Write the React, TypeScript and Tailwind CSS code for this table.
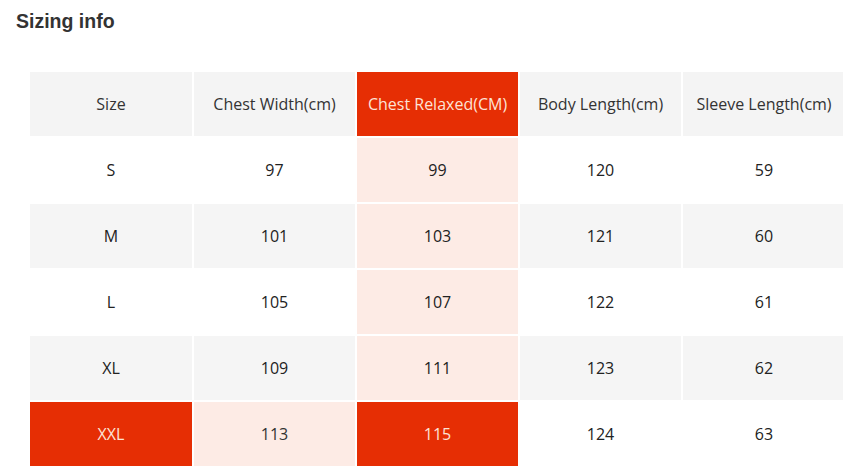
const headers = ["Size", "Chest Width(cm)", "Chest Relaxed(CM)", "Body Length(cm)", "Sleeve Length(cm)"]

const rows = [
  ["S", "97", "99", "120", "59"],
  ["M", "101", "103", "121", "60"],
  ["L", "105", "107", "122", "61"],
  ["XL", "109", "111", "123", "62"],
  ["XXL", "113", "115", "124", "63"],
]

function cellClass(r: number, c: number) {
  // r = -1 is the header row
  if (r === -1) return c === 2 ? "bg-[#e62e04] text-[#fde3d6]" : "bg-[#f4f4f4] text-[#333]"
  if (r === 4) {
    if (c === 0 || c === 2) return "bg-[#e62e04] text-[#fde3d6]"
    if (c === 1) return "bg-[#fdebe5] text-[#333]"
    return "bg-white text-[#222]"
  }
  if (c === 2) return "bg-[#fdebe5] text-[#222]"
  return r % 2 === 1 ? "bg-[#f5f5f5] text-[#222]" : "bg-white text-[#222]"
}

export default function App() {
  return (
    <div className="w-[843px] h-[469px] overflow-hidden bg-white">
      <h2 className="pl-4 pt-[9px] text-[19.5px] font-bold text-[#333] leading-6 font-['Liberation_Sans',Arial,sans-serif]">
        Sizing info
      </h2>
      <div className="pl-[30px] pt-[39px]">
        <div className="grid grid-cols-[162px_161px_161px_161px_162px] auto-rows-[64px] gap-[2px] w-[815px] font-['Open_Sans',sans-serif] text-[16px]">
          {headers.map((h, c) => (
            <div key={h} className={`flex items-center justify-center whitespace-nowrap ${cellClass(-1, c)}`}>
              {h}
            </div>
          ))}
          {rows.map((row, r) =>
            row.map((v, c) => (
              <div key={`${r}-${c}`} className={`flex items-center justify-center ${cellClass(r, c)}`}>
                {v}
              </div>
            ))
          )}
        </div>
      </div>
    </div>
  )
}
